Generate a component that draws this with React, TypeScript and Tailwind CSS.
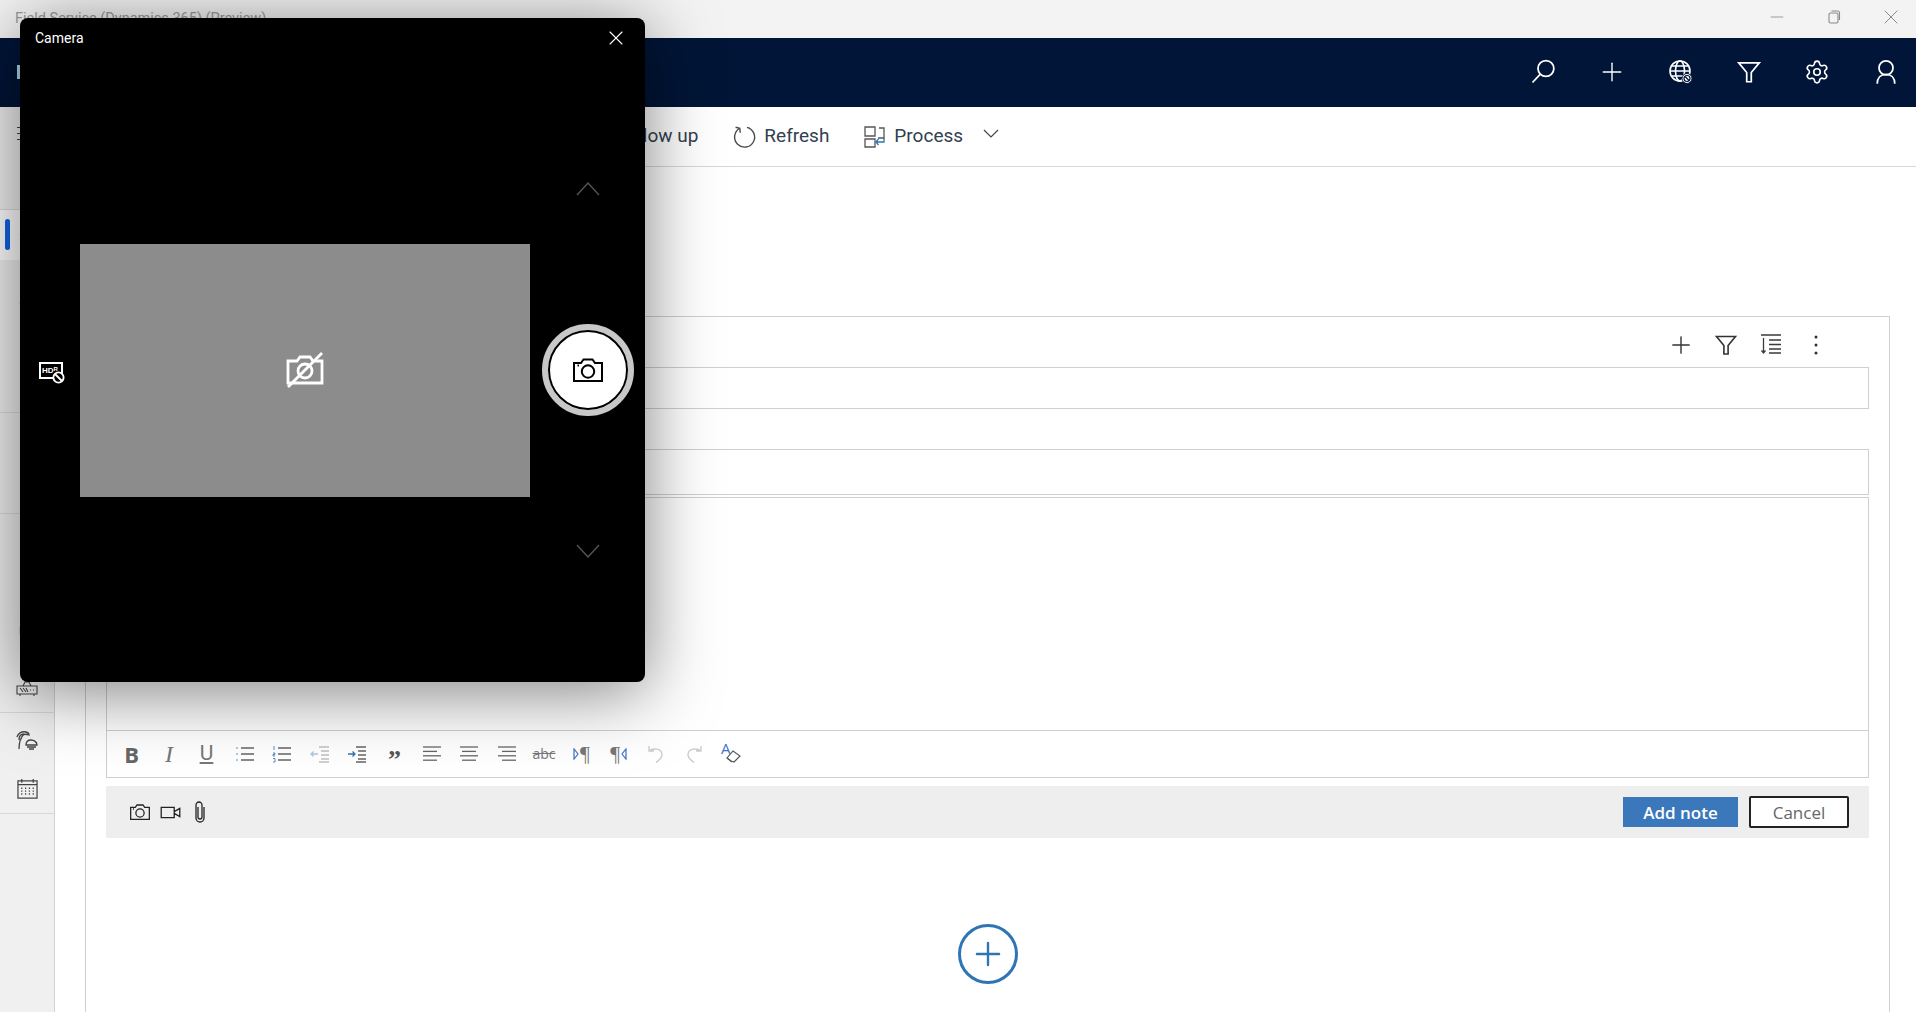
import type { ReactNode } from 'react';
import { Plus, Settings, X, Minus, Map, Users, Truck, ClipboardList, Clock, Package } from 'lucide-react';

function Funnel({ className }: { className?: string }) {
  return (
    <svg viewBox="0 0 24 24" fill="none" stroke="currentColor" strokeWidth="1.6" className={className}>
      <path d="M2.5 3.5h19l-7.4 9v8.500h-4.2v-8.500z" />
    </svg>
  );
}

function SearchGlyph() {
  return (
    <svg viewBox="0 0 24 24" fill="none" stroke="white" strokeWidth="1.5" className="w-7 h-7">
      <circle cx="14.500" cy="9" r="6.800" />
      <path d="M9.500 14L3 21" />
    </svg>
  );
}

function Globe() {
  return (
    <svg viewBox="0 0 28 28" fill="none" stroke="currentColor" strokeWidth="1.6" className="w-7 h-7 text-white">
      <circle cx="14" cy="13" r="10" />
      <ellipse cx="14" cy="13" rx="4.500" ry="10" />
      <path d="M4 13h20M5.500 8h17M5.500 18h12" />
      <circle cx="21" cy="20.500" r="5" fill="white" stroke="#001537" strokeWidth="1" />
      <circle cx="21" cy="20.500" r="3" stroke="#001537" strokeWidth="1.2" />
      <path d="M19 18.500l4 4" stroke="#001537" strokeWidth="1.2" />
    </svg>
  );
}

function UserGlyph() {
  return (
    <svg viewBox="0 0 24 24" fill="none" stroke="white" strokeWidth="1.5" className="w-7 h-7">
      <circle cx="12" cy="8.500" r="6" />
      <path d="M4.500 22c0-5 3-8 7.500-8s7.500 3 7.500 8" />
    </svg>
  );
}

function CameraGlyph({ className, strokeWidth = 1.5 }: { className?: string; strokeWidth?: number }) {
  return (
    <svg viewBox="0 0 30 24" fill="none" stroke="currentColor" strokeWidth={strokeWidth} className={className}>
      <path d="M1 5h7l2.500-3.500h9L22 5h7v18H1z" />
      <circle cx="15" cy="13.500" r="6.200" />
      <path d="M4.500 7.500h1.500" />
    </svg>
  );
}

function CameraOff() {
  return (
    <svg viewBox="0 0 40 38" fill="none" stroke="white" strokeWidth="2.800" className="w-[40px] h-[38px]">
      <path d="M3 10h9l3-4h10l3 4h9v22H3z" />
      <circle cx="20" cy="20" r="7" />
      <path d="M3 36L37 2" />
    </svg>
  );
}

function Hdr() {
  return (
    <div className="relative w-[24px] h-[17px] border-2 border-white flex items-center justify-start pl-[1px]">
      <span className="text-[8px] leading-none font-bold text-white font-['Liberation_Sans',sans-serif]">HD</span>
      <span className="text-[6px] leading-none font-bold text-white mb-[3px] font-['Liberation_Sans',sans-serif]">R</span>
      <svg viewBox="0 0 14 14" fill="black" stroke="white" strokeWidth="2" className="absolute w-[13px] h-[13px] right-[-4px] bottom-[-7px]">
        <circle cx="7" cy="7" r="5.500" />
        <path d="M3.500 3.500l7 7" />
      </svg>
    </div>
  );
}

function Refresh() {
  return (
    <svg viewBox="0 0 24 24" fill="none" stroke="#4a4a4a" strokeWidth="1.4" className="w-[24px] h-[24px]">
      <path d="M6.500 3.500A10 10 0 1 0 14 2.400" />
      <path d="M2.600 2.200l4.200 1 .4 4.600" />
    </svg>
  );
}

function ProcessIcon() {
  return (
    <svg viewBox="0 0 22 22" fill="none" strokeWidth="1.3" className="w-[22px] h-[22px]">
      <path d="M1 1h10v9H1zM1 13h10v8H1z" stroke="#555" />
      <path d="M15 2h5v10h-6" stroke="#555" />
      <path d="M20 12v4h-8m2.500-3L12 16l2.500 3" stroke="#2f74b5" />
    </svg>
  );
}

function SortIcon() {
  return (
    <svg viewBox="0 0 24 24" fill="none" stroke="#3a3a3a" strokeWidth="1.3" className="w-[24px] h-[24px]">
      <path d="M2 2h20M4.500 5v15M2.500 17.500l2 2.500 2-2.500M10 7h12M10 11.500h12M10 16h12M10 20h12" />
    </svg>
  );
}

function DotsIcon() {
  return (
    <svg viewBox="0 0 24 24" fill="#333" className="w-[24px] h-[24px]">
      <circle cx="12" cy="4" r="1.500" />
      <circle cx="12" cy="12" r="1.500" />
      <circle cx="12" cy="20" r="1.500" />
    </svg>
  );
}

function Lines({ rows, stroke = '#666' }: { rows: [number, number][]; stroke?: string }) {
  return (
    <svg viewBox="0 0 20 20" fill="none" stroke={stroke} strokeWidth="1.3" className="w-[20px] h-[20px]">
      {rows.map(([a, b], i) => (
        <path key={i} d={`M${a} ${3 + i * 4.4}H${b}`} />
      ))}
    </svg>
  );
}

function ListIcon({ numbered }: { numbered?: boolean }) {
  return (
    <svg viewBox="0 0 20 20" fill="none" strokeWidth="1.3" className="w-[20px] h-[20px]">
      <path d="M6 4h13M6 10h13M6 16h13" stroke="#666" />
      {numbered ? (
        <path d="M2 2v4M1 9h2v1.500H1V12h2M1 14.500h2V18H1" stroke="#2f74b5" strokeWidth="0.8" />
      ) : (
        <path d="M1.500 4h1.500M1.500 10h1.500M1.500 16h1.500" stroke="#2f74b5" strokeDasharray="1 1" />
      )}
    </svg>
  );
}

function IndentIcon({ dir, faded }: { dir: 'in' | 'out'; faded?: boolean }) {
  const arrow = dir === 'in' ? 'M1 10h7M5.500 7.500L8 10l-2.500 2.500' : 'M1 10h7M3.500 7.500L1 10l2.500 2.500';
  return (
    <svg viewBox="0 0 20 20" fill="none" strokeWidth="1.300" className={`w-[20px] h-[20px] ${faded ? 'opacity-40' : ''}`}>
      <path d="M9 3h10M11 7h8M11 11h8M11 15h8M9 18h10" stroke="#666" />
      <path d={arrow} stroke="#2f74b5" />
    </svg>
  );
}

function Para({ flip }: { flip?: boolean }) {
  return (
    <span className={`flex items-center gap-[1px] ${flip ? 'flex-row-reverse' : ''}`}>
      <svg viewBox="0 0 6 12" fill="none" stroke="#3f72c4" strokeWidth="1.200" className="w-[6px] h-[12px]">
        <path d={flip ? 'M5 1v10L1 6z' : 'M1 1v10l4-5z'} />
      </svg>
      <span className="text-[22px] leading-none text-[#777] font-['Liberation_Serif',serif]">¶</span>
    </span>
  );
}

function UndoIcon({ flip }: { flip?: boolean }) {
  return (
    <svg viewBox="0 0 18 20" fill="none" stroke="#ccc" strokeWidth="1.300" className={`w-[18px] h-[20px] ${flip ? '-scale-x-100' : ''}`}>
      <path d="M2 2v5h5M2 7c4-3 12-3 13 3 .6 4-3 6-6 8.500" />
    </svg>
  );
}

function ClearFormat() {
  return (
    <span className="relative flex w-[20px] h-[20px]">
      <span className="absolute left-0 top-[-3px] text-[15px] leading-none text-[#3f72c4]">A</span>
      <svg viewBox="0 0 20 20" fill="none" stroke="#555" strokeWidth="1.100" className="absolute inset-0 w-[20px] h-[20px]">
        <path d="M12 7l7 5-6 6-3-1-4-3z" />
        <path d="M6 14l5 4" />
      </svg>
    </span>
  );
}

function VideoIcon() {
  return (
    <svg viewBox="0 0 22 14" fill="none" stroke="#222" strokeWidth="1.400" className="w-[21px] h-[13px]">
      <path d="M1 1.500h14v11H1zM15 6l6-3.500v9L15 8" />
    </svg>
  );
}

function ClipIcon() {
  return (
    <svg viewBox="0 0 12 22" fill="none" stroke="#222" strokeWidth="1.300" className="w-[12px] h-[22px]">
      <path d="M4 6v10a2 2 0 0 0 4 0V4a3 3 0 0 0-6 0v13a4 4 0 0 0 8 0V6" />
    </svg>
  );
}

function TruckRack() {
  return (
    <svg viewBox="0 0 22 18" fill="none" stroke="#444" strokeWidth="1.100" className="w-[22px] h-[18px]">
      <path d="M1 7h20v8H1zM4 15v2M18 15v2M7 7l2-4h4l2 4" />
      <path d="M4 9l3 4M7 9l3 4M10 9l2 4M14 11h1M17 11h1" />
    </svg>
  );
}

function Palm() {
  return (
    <svg viewBox="0 0 22 22" fill="none" stroke="#444" strokeWidth="1.300" className="w-[22px] h-[22px]">
      <path d="M3 21c0-6 1-11 5-15M1 9c1-4 5-6 9-5 2 .5 3 2 3 3-3-1-5-1-6 0M8 6c-3 0-5 2-5 6" />
      <path d="M10 17c0-3 2-5 5-5s6 2 6 5zM11 19h9M13 21h5" />
    </svg>
  );
}

function CalendarIcon() {
  return (
    <svg viewBox="0 0 22 22" fill="none" stroke="#444" strokeWidth="1.300" className="w-[21px] h-[21px]">
      <path d="M1 3h20v18H1zM1 7h20M5 1v4M17 1v4" />
      <path d="M5 10v9M9 10v9M13 10v9M17 10v9" strokeDasharray="1.500 1.500" />
    </svg>
  );
}

function ToolBtn({ children }: { children: ReactNode }) {
  return <div className="w-[37.4px] h-full flex items-center justify-center">{children}</div>;
}

function NavIcon({ children }: { children: ReactNode }) {
  return <div className="w-7 h-7 flex items-center justify-center">{children}</div>;
}

function Sidebar() {
  return (
    <aside className="w-[55px] shrink-0 bg-[#f0f0f0] border-r border-[#d2d2d2] flex flex-col text-[#444]">
      <div className="h-[103px] pt-[20px] pl-[17px] border-b border-[#dcdcdc]">
        <div className="w-[21px] h-[13px] border-y border-[#444] flex items-center">
          <div className="w-full border-t border-[#444]" />
        </div>
      </div>
      <div className="relative h-[50px] bg-white flex items-center justify-center">
        <span className="absolute left-[5px] top-[9px] w-[5px] h-[31px] rounded bg-[#0f62e6]" />
        <Clock className="w-4 h-4" strokeWidth={1.4} />
      </div>
      <div className="h-[153px] pt-[30px] flex flex-col items-center gap-[30px] border-b border-[#dcdcdc]">
        <Users className="w-4 h-4" strokeWidth={1.4} />
        <Map className="w-4 h-4" strokeWidth={1.4} />
      </div>
      <div className="h-[101px] pt-[24px] flex flex-col items-center gap-[25px] border-b border-[#dcdcdc]">
        <ClipboardList className="w-4 h-4" strokeWidth={1.4} />
        <Package className="w-4 h-4" strokeWidth={1.4} />
      </div>
      <div className="h-[199px] pb-[15px] flex flex-col items-center justify-end gap-[40px] border-b border-[#d8d8d8]">
        <Truck className="w-4 h-4" strokeWidth={1.4} />
        <TruckRack />
      </div>
      <div className="h-[101px] pt-[15px] flex flex-col items-center gap-[28px] border-b border-[#d8d8d8]">
        <Palm />
        <CalendarIcon />
      </div>
    </aside>
  );
}

function CameraWindow() {
  return (
    <div className="absolute left-[20px] top-[18px] w-[625px] h-[664px] rounded-lg bg-black flex flex-col shadow-[0_10px_70px_rgba(0,0,0,0.5)]">
      <div className="h-[40px] shrink-0 flex items-center justify-between pl-[15px] pr-[17px]">
        <span className="text-[14px] text-white font-['Roboto',sans-serif]">Camera</span>
        <X className="w-6 h-6 text-white" strokeWidth={1.1} />
      </div>
      <div className="flex-1 flex items-center">
        <div className="w-[60px] flex justify-center pt-[1px] pl-[2px]">
          <Hdr />
        </div>
        <div className="w-[450px] h-[253px] bg-[#8c8c8d] flex items-center justify-center">
          <CameraOff />
        </div>
        <div className="flex-1 h-[376px] flex flex-col items-center justify-between">
          <svg viewBox="0 0 24 14" fill="none" stroke="#555" strokeWidth="1.400" className="w-[24px] h-[14px]">
            <path d="M1 13L12 1l11 12" />
          </svg>
          <div className="w-[92px] h-[92px] rounded-full bg-white border-[6px] border-[#c8c8c8] flex items-center justify-center outline-2 outline-black -outline-offset-8">
            <CameraGlyph className="w-[30px] h-[24px] text-black" strokeWidth={2} />
          </div>
          <svg viewBox="0 0 24 14" fill="none" stroke="#555" strokeWidth="1.400" className="w-[24px] h-[14px]">
            <path d="M1 1l11 12L23 1" />
          </svg>
        </div>
      </div>
    </div>
  );
}

export default function App() {
  return (
    <div className="relative h-screen w-full overflow-hidden bg-white flex flex-col font-['Open_Sans',sans-serif]">
      {/* Title bar */}
      <div className="h-[38px] shrink-0 bg-[#f3f3f3] flex items-center justify-between pl-[15px] pr-[17px] pb-[4px]">
        <span className="mt-[3px] text-[14.5px] text-[#9a9a9a] font-['Roboto',sans-serif]">Field Service (Dynamics 365) (Preview)</span>
        <div className="flex items-center gap-[41px] text-[#8a8a8a]">
          <div className="w-4 h-4 flex items-center justify-center">
            <Minus className="w-[20px] h-[20px] shrink-0" strokeWidth={1} />
          </div>
          <svg viewBox="0 0 16 16" fill="none" stroke="currentColor" strokeWidth="1.100" className="w-4 h-4">
            <rect x="3" y="4" width="9" height="10" rx="1.500" />
            <path d="M5.500 2h6a2 2 0 0 1 2 2v7" />
          </svg>
          <div className="w-4 h-4 flex items-center justify-center">
            <X className="w-[24px] h-[24px] shrink-0" strokeWidth={1} />
          </div>
        </div>
      </div>

      {/* Nav bar */}
      <div className="h-[69px] shrink-0 bg-[#001537] flex items-center justify-between pl-[17px] pr-[16px] pb-[2px]">
        <div className="w-[4px] h-[14px] bg-[#a9d8ee]" />
        <div className="flex items-center gap-[40.6px] text-white">
          <NavIcon>
            <SearchGlyph />
          </NavIcon>
          <NavIcon>
            <Plus className="w-[30px] h-[30px] shrink-0" strokeWidth={1.1} />
          </NavIcon>
          <NavIcon>
            <Globe />
          </NavIcon>
          <NavIcon>
            <Funnel className="w-[26px] h-[26px]" />
          </NavIcon>
          <NavIcon>
            <Settings className="w-[26px] h-[26px]" strokeWidth={1.5} />
          </NavIcon>
          <NavIcon>
            <UserGlyph />
          </NavIcon>
        </div>
      </div>

      <div className="flex-1 min-h-0 flex">
        <Sidebar />

        <main className="flex-1 min-w-0 flex flex-col">
          {/* Command bar */}
          <div className="h-[60px] shrink-0 border-b border-[#d8d8d8] flex items-center pl-[562px] text-[19px] text-[#33404f] font-['Roboto',sans-serif]">
            <span>Follow up</span>
            <span className="ml-[35px] flex items-center gap-[7px]">
              <Refresh />
              Refresh
            </span>
            <span className="ml-[35px] flex items-center gap-[8px]">
              <ProcessIcon />
              Process
            </span>
            <svg viewBox="0 0 16 9" fill="none" stroke="#444" strokeWidth="1.200" className="ml-[20px] mb-[6px] w-[16px] h-[9px]">
              <path d="M1 1l7 7 7-7" />
            </svg>
          </div>

          {/* Notes panel */}
          <div className="flex-1 min-h-0 pt-[149px] pl-[30px] pr-[26px]">
            <div className="h-full border-x border-t border-[#cfcfcf] px-[20px]">
              <div className="h-[50px] flex items-center justify-end gap-[21px] pr-[41px] pt-[6px] text-[#333]">
                <Plus className="w-7 h-7 -mx-[2px]" strokeWidth={1.2} />
                <Funnel className="w-6 h-6" />
                <SortIcon />
                <DotsIcon />
              </div>
              <div className="h-[42px] border border-[#cfcfcf]" />
              <div className="h-[46px] mt-[40px] border border-[#cfcfcf]" />
              <div className="h-[281px] mt-[2px] border border-[#cfcfcf] flex flex-col">
                <div className="flex-1" />
                <div className="h-[47px] shrink-0 border-t border-[#cfcfcf] flex items-center pl-[7px]">
                  <ToolBtn>
                    <span className="pr-[2px] text-[22px] font-bold text-[#666]">B</span>
                  </ToolBtn>
                  <ToolBtn>
                    <span className="pr-[2px] text-[24px] italic text-[#777] font-['Liberation_Serif',serif]">I</span>
                  </ToolBtn>
                  <ToolBtn>
                    <span className="pr-[2px] text-[21px] underline text-[#777] font-['Roboto',sans-serif]">U</span>
                  </ToolBtn>
                  <ToolBtn>
                    <ListIcon />
                  </ToolBtn>
                  <ToolBtn>
                    <ListIcon numbered />
                  </ToolBtn>
                  <ToolBtn>
                    <IndentIcon dir="out" faded />
                  </ToolBtn>
                  <ToolBtn>
                    <IndentIcon dir="in" />
                  </ToolBtn>
                  <ToolBtn>
                    <span className="text-[26px] leading-none font-bold text-[#555] pt-[12px] font-['Liberation_Serif',serif]">”</span>
                  </ToolBtn>
                  <ToolBtn>
                    <Lines rows={[[1, 19], [1, 15], [1, 19], [1, 15]]} />
                  </ToolBtn>
                  <ToolBtn>
                    <Lines rows={[[1, 19], [3, 17], [1, 19], [3, 17]]} />
                  </ToolBtn>
                  <ToolBtn>
                    <Lines rows={[[1, 19], [5, 19], [1, 19], [5, 19]]} />
                  </ToolBtn>
                  <ToolBtn>
                    <span className="text-[14px] leading-none line-through text-[#777]">abc</span>
                  </ToolBtn>
                  <ToolBtn>
                    <Para />
                  </ToolBtn>
                  <ToolBtn>
                    <Para flip />
                  </ToolBtn>
                  <ToolBtn>
                    <UndoIcon />
                  </ToolBtn>
                  <ToolBtn>
                    <UndoIcon flip />
                  </ToolBtn>
                  <ToolBtn>
                    <ClearFormat />
                  </ToolBtn>
                </div>
              </div>

              <div className="h-[52px] mt-[8px] bg-[#eeeeee] flex items-center justify-between pl-[19px] pr-[20px]">
                <div className="flex items-center text-[#222]">
                  <div className="w-[30px] flex justify-center">
                    <CameraGlyph className="w-[20px] h-[16px]" strokeWidth={1.9} />
                  </div>
                  <div className="w-[30px] flex justify-center">
                    <VideoIcon />
                  </div>
                  <div className="w-[30px] flex justify-center">
                    <ClipIcon />
                  </div>
                </div>
                <div className="flex items-center gap-[11px] text-[17px]">
                  <button className="w-[115px] h-[30px] bg-[#3a77bb] text-white font-semibold flex items-center justify-center pt-[1px]">
                    Add note
                  </button>
                  <button className="w-[100px] h-[32px] bg-white border-2 border-[#222] rounded-[2px] text-[#666] font-medium flex items-center justify-center pt-[1px]">
                    Cancel
                  </button>
                </div>
              </div>

              <div className="flex justify-center pt-[86px]">
                <div className="w-[60px] h-[60px] rounded-full border-[3px] border-[#2f74b5] flex items-center justify-center text-[#2f74b5]">
                  <Plus className="w-[38px] h-[38px]" strokeWidth={1.5} />
                </div>
              </div>
            </div>
          </div>
        </main>
      </div>

      <CameraWindow />
    </div>
  );
}
